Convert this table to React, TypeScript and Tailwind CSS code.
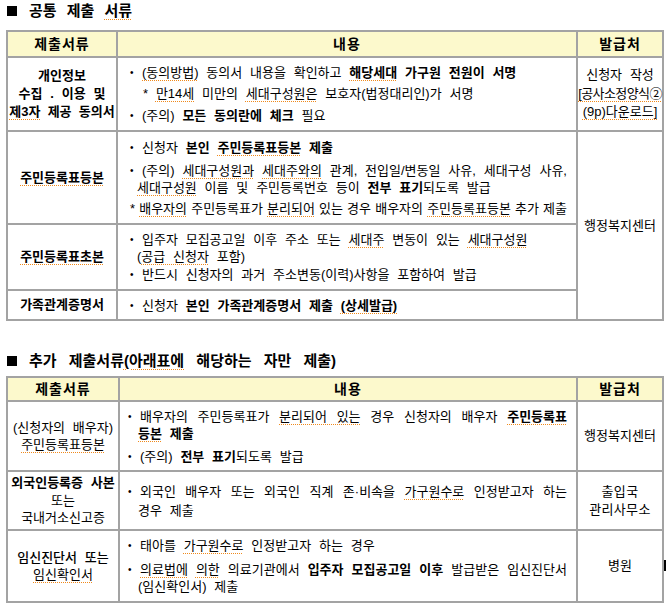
import type { ReactNode } from 'react';

// spell-check style dotted underline seen in the source document
function U({ children }: { children: ReactNode }) {
  return (
    <span className="underline decoration-dotted decoration-[#f08a1c] decoration-1 underline-offset-[3px]">
      {children}
    </span>
  );
}

const JUSTIFY = 'text-justify [text-align-last:justify] [word-spacing:0px] whitespace-nowrap';

function B({ children, className = '', j = false }: { children: ReactNode; className?: string; j?: boolean }) {
  return (
    <div className={`flex leading-[17px] ${className}`}>
      <span className="w-[12px] shrink-0 text-[10px]">•</span>
      <span className={`flex-1 min-w-0 ${j ? JUSTIFY : 'whitespace-nowrap'}`}>{children}</span>
    </div>
  );
}

function C({ children, className = '', j = false }: { children: ReactNode; className?: string; j?: boolean }) {
  return <div className={`leading-[17px] ${j ? JUSTIFY : 'whitespace-nowrap'} ${className}`}>{children}</div>;
}

function Title({ children, wide = false }: { children: ReactNode; wide?: boolean }) {
  return (
    <div className="flex h-[22px] items-center pl-[7px]">
      <span className="inline-block h-[10px] w-[10px] bg-black" />
      <span className={`ml-[12px] text-[15px] font-bold ${wide ? '[word-spacing:8px]' : '[word-spacing:6px]'}`}>
        {children}
      </span>
    </div>
  );
}

const head = 'flex items-center justify-center bg-[#fcf9cc] text-[14px] font-bold tracking-[1px]';
const first = 'flex flex-col items-center justify-center bg-white text-center whitespace-nowrap';
const body = 'flex flex-col justify-center bg-white pr-[9px]';
const third = 'flex flex-col items-center justify-center bg-white text-center whitespace-nowrap';

export default function App() {
  return (
    <div className="relative h-[612px] w-[667px] overflow-hidden bg-white text-[13px] text-black font-['Liberation_Sans','Noto_Sans_CJK_KR',sans-serif] [word-spacing:4.2px]">
      <Title>
        공통 제출 <U>서류</U>
      </Title>

      <div className="ml-[6px] mt-[8px] grid w-[658px] grid-cols-[108px_458px_84px] grid-rows-[24px_72px_91px_64px_28px] gap-[2px] bg-[#a3a3a3] p-[2px]">
        <div className={head}>제출서류</div>
        <div className={head}>내용</div>
        <div className={head}>발급처</div>

        <div className={`${first} font-bold leading-[18px]`}>
          <span>개인정보</span>
          <span>수집 . 이용 및</span>
          <span className="[word-spacing:3.6px]">
            <U>제3자</U> 제공 동의서
          </span>
        </div>
        <div className={`${body} pl-[12px]`}>
          <B>
            <U>(동의방법)</U> 동의서 내용을 확인하고{' '}
            <b>
              <U>해당세대</U> 가구원 전원이 서명
            </b>
          </B>
          <C className="mt-[4px] pl-[13px]">
            * <U>만14세</U> 미만의 <U>세대구성원은</U> 보호자(법정대리인)가 서명
          </C>
          <B className="mt-[5px]">
            (주의) <b>모든 동의란에 체크</b> 필요
          </B>
        </div>
        <div className={`${third} leading-[18.5px]`}>
          <span>신청자 작성</span>
          <span className="tracking-[-0.6px]">
            <U>[공사소정양식②</U>
          </span>
          <span>
            <U>(9p)다운로드]</U>
          </span>
        </div>

        <div className={`${first} font-bold`}>
          <U>주민등록표등본</U>
        </div>
        <div className={`${body} pl-[12px]`}>
          <B>
            신청자{' '}
            <b>
              본인 <U>주민등록표등본</U> 제출
            </b>
          </B>
          <B className="mt-[6px]" j>
            (주의) <U>세대구성원과</U> <U>세대주와의</U> 관계, 전입일/변동일 사유, 세대구성 사유,
          </B>
          <C className="pl-[7px]">
            <U>세대구성원</U> 이름 및 주민등록번호 등이 <b>전부 표기</b>되도록 발급
          </C>
          <C className="mt-[4px]" j>
            * <U>배우자의</U> 주민등록표가 <U>분리되어</U> 있는 경우 배우자의 <U>주민등록표등본</U> 추가 제출
          </C>
        </div>
        <div className={`${third} row-span-3`}>행정복지센터</div>

        <div className={`${first} font-bold`}>
          <U>주민등록표초본</U>
        </div>
        <div className={`${body} pl-[12px]`}>
          <B>
            입주자 모집공고일 이후 주소 또는 <U>세대주</U> 변동이 있는 <U>세대구성원</U>
          </B>
          <C className="pl-[7px]">
            (<U>공급 신청자</U> 포함)
          </C>
          <B className="mt-[1px]">반드시 신청자의 과거 주소변동(이력)사항을 포함하여 발급</B>
        </div>

        <div className={`${first} font-bold`}>가족관계증명서</div>
        <div className={`${body} pl-[12px]`}>
          <B>
            신청자{' '}
            <b>
              본인 가족관계증명서 제출 <U>(상세발급)</U>
            </b>
          </B>
        </div>
      </div>

      <div className="mt-[29px]">
        <Title wide>
          추가 제출서류<U>(아래표에</U> 해당하는 자만 제출)
        </Title>
      </div>

      <div className="ml-[6px] mt-[4px] grid w-[658px] grid-cols-[110px_456px_84px] grid-rows-[22px_68px_57px_70px] gap-[2px] bg-[#a3a3a3] p-[2px]">
        <div className={head}>제출서류</div>
        <div className={head}>내용</div>
        <div className={head}>발급처</div>

        <div className={`${first} leading-[17px]`}>
          <span>(신청자의 배우자)</span>
          <span>
            <U>주민등록표등본</U>
          </span>
        </div>
        <div className={`${body} pl-[8px]`}>
          <B j>
            배우자의 주민등록표가 <U>분리되어 있는</U> 경우 신청자의 배우자{' '}
            <b>
              <U>주민등록표</U>
            </b>
          </B>
          <C className="pl-[10px]">
            <b>
              <U>등본</U> 제출
            </b>
          </C>
          <B className="mt-[6px]">
            (주의) <b>전부 표기</b>되도록 발급
          </B>
        </div>
        <div className={third}>행정복지센터</div>

        <div className={`${first} leading-[17.5px]`}>
          <span className="font-semibold">외국인등록증 사본</span>
          <span>또는</span>
          <span>국내거소신고증</span>
        </div>
        <div className={`${body} pl-[8px]`}>
          <B j>
            외국인 배우자 또는 외국인 직계 존·비속을 <U>가구원수로</U> 인정받고자 하는
          </B>
          <C className="mt-[2px] pl-[10px]">경우 제출</C>
        </div>
        <div className={`${third} leading-[18px] tracking-[0.3px]`}>
          <span>출입국</span>
          <span>관리사무소</span>
        </div>

        <div className={`${first} leading-[17px]`}>
          <span className="font-medium">임신진단서 또는</span>
          <span>
            <U>임신확인서</U>
          </span>
        </div>
        <div className={`${body} pl-[8px]`}>
          <B>
            태아를 <U>가구원수로</U> 인정받고자 하는 경우
          </B>
          <B className="mt-[7px]" j>
            <U>의료법에</U> <U>의한</U> 의료기관에서 <b>입주자 모집공고일 이후</b> 발급받은 임신진단서
          </B>
          <C className="pl-[10px]">(임신확인서) 제출</C>
        </div>
        <div className={third}>병원</div>
      </div>

      {/* text cursor left in the document */}
      <div className="absolute left-[664px] top-[560px] h-[11px] w-[2px] bg-black" />
    </div>
  );
}
